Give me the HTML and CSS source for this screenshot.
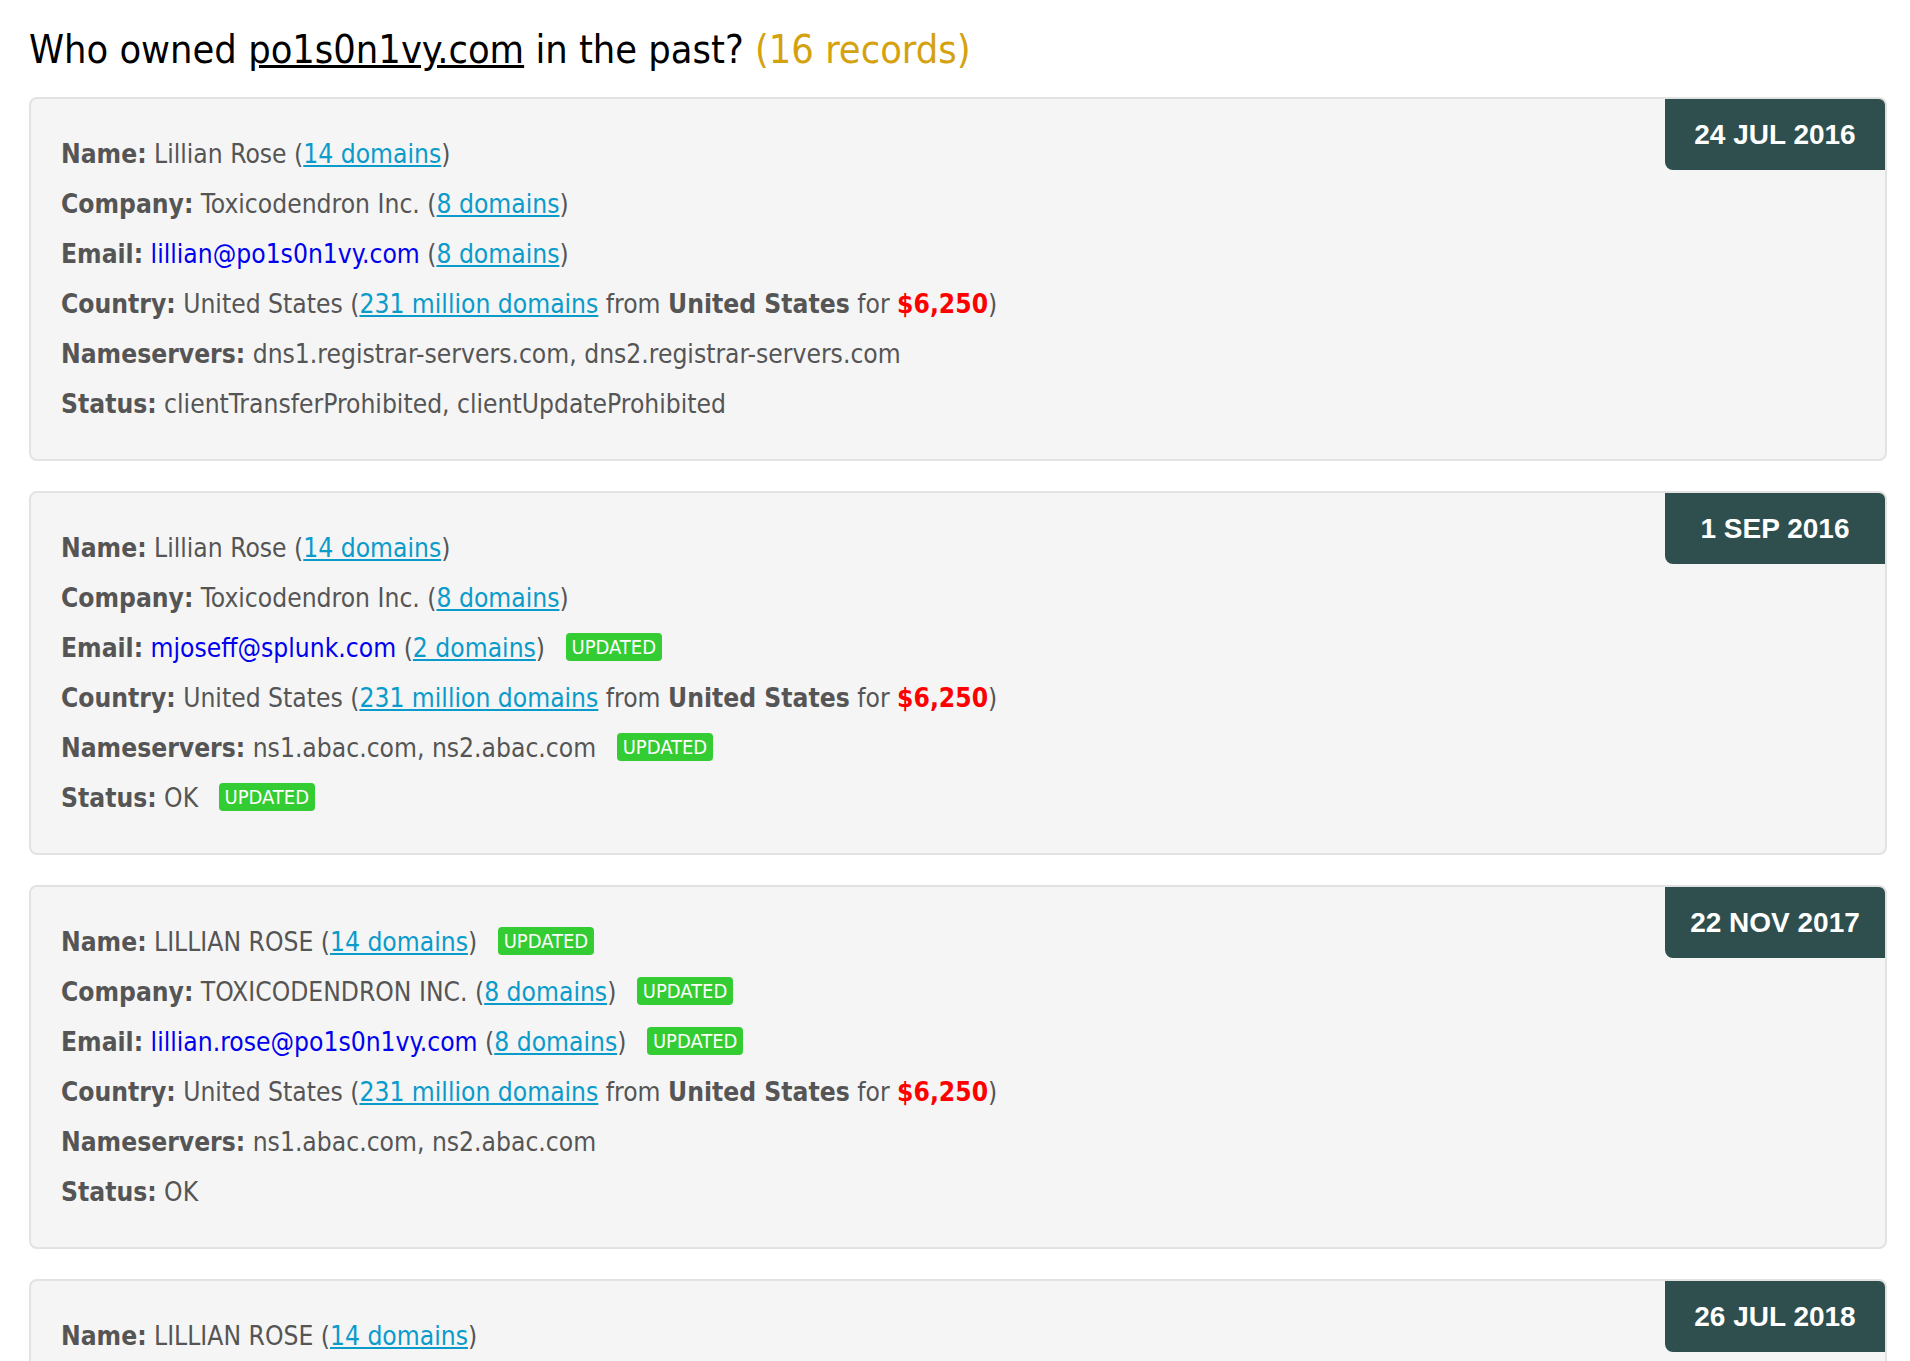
FILE: index.html
```html
<!DOCTYPE html>
<html>
<head>
<meta charset="utf-8">
<link rel="stylesheet" href="styles.css">
</head>
<body>
<div class="page">
  <h1 class="title">Who owned <a class="domain" href="#">po1s0n1vy.com</a> in the past? <span class="count">(16 records)</span></h1>

  <div class="record">
    <div class="date">24 JUL 2016</div>
    <div class="row"><b>Name:</b> Lillian Rose (<a class="lnk" href="#">14 domains</a>)</div>
    <div class="row"><b>Company:</b> Toxicodendron Inc. (<a class="lnk" href="#">8 domains</a>)</div>
    <div class="row"><b>Email:</b> <a class="mail" href="#">lillian@po1s0n1vy.com</a> (<a class="lnk" href="#">8 domains</a>)</div>
    <div class="row"><b>Country:</b> United States (<a class="lnk" href="#">231 million domains</a> from <b>United States</b> for <b class="price">$6,250</b>)</div>
    <div class="row"><b>Nameservers:</b> dns1.registrar-servers.com, dns2.registrar-servers.com</div>
    <div class="row"><b>Status:</b> clientTransferProhibited, clientUpdateProhibited</div>
  </div>

  <div class="record">
    <div class="date">1 SEP 2016</div>
    <div class="row"><b>Name:</b> Lillian Rose (<a class="lnk" href="#">14 domains</a>)</div>
    <div class="row"><b>Company:</b> Toxicodendron Inc. (<a class="lnk" href="#">8 domains</a>)</div>
    <div class="row"><b>Email:</b> <a class="mail" href="#">mjoseff@splunk.com</a> (<a class="lnk" href="#">2 domains</a>) <span class="upd">UPDATED</span></div>
    <div class="row"><b>Country:</b> United States (<a class="lnk" href="#">231 million domains</a> from <b>United States</b> for <b class="price">$6,250</b>)</div>
    <div class="row"><b>Nameservers:</b> ns1.abac.com, ns2.abac.com <span class="upd">UPDATED</span></div>
    <div class="row"><b>Status:</b> OK <span class="upd">UPDATED</span></div>
  </div>

  <div class="record">
    <div class="date">22 NOV 2017</div>
    <div class="row"><b>Name:</b> LILLIAN ROSE (<a class="lnk" href="#">14 domains</a>) <span class="upd">UPDATED</span></div>
    <div class="row"><b>Company:</b> TOXICODENDRON INC. (<a class="lnk" href="#">8 domains</a>) <span class="upd">UPDATED</span></div>
    <div class="row"><b>Email:</b> <a class="mail" href="#">lillian.rose@po1s0n1vy.com</a> (<a class="lnk" href="#">8 domains</a>) <span class="upd">UPDATED</span></div>
    <div class="row"><b>Country:</b> United States (<a class="lnk" href="#">231 million domains</a> from <b>United States</b> for <b class="price">$6,250</b>)</div>
    <div class="row"><b>Nameservers:</b> ns1.abac.com, ns2.abac.com</div>
    <div class="row"><b>Status:</b> OK</div>
  </div>

  <div class="record">
    <div class="date">26 JUL 2018</div>
    <div class="row"><b>Name:</b> LILLIAN ROSE (<a class="lnk" href="#">14 domains</a>)</div>
  </div>
</div>
</body>
</html>
```

FILE: styles.css
```css
html, body {
  margin: 0;
  padding: 0;
  background: #ffffff;
}

.page {
  padding: 0 23px 0 29px;
  font-family: "DejaVu Sans Condensed", "DejaVu Sans", sans-serif;
}

.title {
  margin: 0;
  padding: 21px 0 20px;
  font-size: 39.4px;
  font-weight: normal;
  line-height: 56px;
  color: #000;
}

.domain {
  color: #000;
  text-decoration: underline;
}

.count {
  color: #d4a20f;
}

.record {
  position: relative;
  background: #f5f5f5;
  border: 2px solid #e2e2e2;
  border-radius: 8px;
  padding: 30px 30px 30px;
  margin-bottom: 30px;
  font-size: 26.2px;
  color: #555;
}

.row {
  line-height: 50px;
  white-space: nowrap;
}

.row b {
  color: #555;
}

.lnk {
  color: #0a9bcb;
  text-decoration: underline;
}

.mail {
  color: #0000ee;
  text-decoration: none;
}

.price {
  color: #ff0000 !important;
}

.upd {
  display: inline-block;
  margin-left: 13px;
  padding: 0 6px;
  background: #33cc33;
  color: #fff;
  font-size: 20px;
  line-height: 28px;
  border-radius: 4px;
  vertical-align: 3px;
}

.date {
  position: absolute;
  top: 0;
  right: 0;
  width: 220px;
  height: 71px;
  display: flex;
  align-items: center;
  justify-content: center;
  background: #2f4f4f;
  color: #fff;
  font-family: "Liberation Sans", Arial, sans-serif;
  font-weight: bold;
  font-size: 28px;
  border-radius: 0 6px 0 8px;
}
```
